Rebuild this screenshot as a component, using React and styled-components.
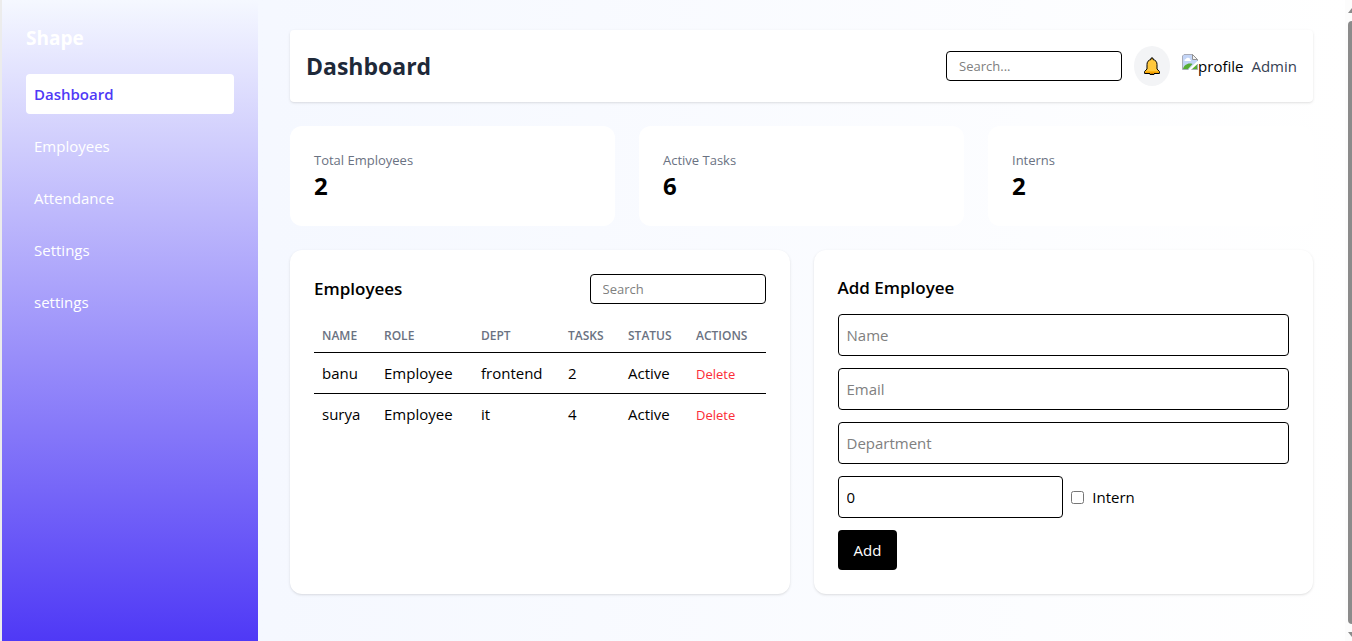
import React, { useState } from "react";
import styled, { createGlobalStyle } from "styled-components";

const GlobalStyle = createGlobalStyle`
  *, *::before, *::after { box-sizing: border-box; }
  body {
    margin: 0;
    font-family: "Segoe UI", "Open Sans", "Noto Sans", sans-serif;
    font-size: 15px;
    line-height: 24px;
    color: #000;
    background: #fff;
  }
  h1, h2, p { margin: 0; }
  button, input { font: inherit; color: inherit; margin: 0; }
`;

const Shell = styled.div`
  display: flex;
  min-height: 100vh;
  border-left: 2px solid #ececec;
  background: linear-gradient(to right, #f3f7ff, #f5f8ff 20%, #fff);
`;

const Sidebar = styled.aside`
  flex: 0 0 256px;
  padding: 24px;
  background: linear-gradient(to bottom, #f5f8ff, #4f39f6);
`;

const Brand = styled.p`
  margin-bottom: 22px;
  font-size: 19px;
  font-weight: 700;
  line-height: 28px;
  color: #fff;
`;

const Nav = styled.nav`
  display: flex;
  flex-direction: column;
  gap: 12px;
`;

const NavLink = styled.a`
  padding: 8px;
  border-radius: 4px;
  text-decoration: none;
  font-weight: ${(p) => (p.$active ? 600 : 400)};
  color: ${(p) => (p.$active ? "#4f39f6" : "#fff")};
  background: ${(p) => (p.$active ? "#fff" : "transparent")};
`;

const Main = styled.main`
  flex: 1;
  min-width: 0;
  padding: 30px 32px;
  display: flex;
  flex-direction: column;
  gap: 24px;
`;

const TopBar = styled.header`
  display: flex;
  align-items: center;
  justify-content: space-between;
  padding: 16px;
  border-radius: 4px;
  background: #fff;
  box-shadow: 0 1px 3px rgba(0, 0, 0, 0.1), 0 1px 2px -1px rgba(0, 0, 0, 0.1);
`;

const PageTitle = styled.h1`
  font-size: 23px;
  font-weight: 700;
  line-height: 32px;
  color: #1e2939;
`;

const Tools = styled.div`
  display: flex;
  align-items: center;
  gap: 12px;
`;

const SearchInput = styled.input`
  width: 176px;
  height: 30px;
  padding: 4px 12px;
  border: 1px solid #000;
  border-radius: 4px;
  background: #fff;
  font-size: 13px;
  line-height: 20px;
  &::placeholder { color: #808080; opacity: 1; }
`;

const BellButton = styled.button`
  display: flex;
  align-items: center;
  justify-content: center;
  width: 36px;
  height: 40px;
  padding: 0;
  border: 0;
  border-radius: 50%;
  background: #f3f4f6;
`;

const Profile = styled.div`
  display: flex;
  align-items: center;
  gap: 8px;
  color: #364153;
`;

const Avatar = styled.span`
  display: flex;
  color: #000;
  svg { flex: none; }
`;

const Stats = styled.section`
  display: grid;
  grid-template-columns: repeat(3, 1fr);
  gap: 24px;
`;

const StatCard = styled.div`
  padding: 24px;
  border-radius: 12px;
  background: #fff;
`;

const StatLabel = styled.p`
  font-size: 13px;
  line-height: 20px;
  color: #6a7282;
`;

const StatValue = styled.p`
  font-size: 24px;
  font-weight: 700;
  line-height: 32px;
`;

const Panels = styled.div`
  display: grid;
  grid-template-columns: repeat(2, 1fr);
  gap: 24px;
`;

const Panel = styled.section`
  min-width: 0;
  padding: 24px;
  border-radius: 12px;
  background: #fff;
  box-shadow: 0 1px 3px rgba(0, 0, 0, 0.1), 0 1px 2px -1px rgba(0, 0, 0, 0.1);
`;

const PanelHead = styled.div`
  display: flex;
  align-items: center;
  justify-content: space-between;
  margin-bottom: 16px;
`;

const PanelTitle = styled.h2`
  font-size: 17px;
  font-weight: 600;
  line-height: 28px;
`;

const Table = styled.table`
  width: 100%;
  table-layout: fixed;
  border-collapse: collapse;
  text-align: left;
`;

const Col = styled.col`
  width: ${(p) => p.$w}px;
`;

const Th = styled.th`
  padding: 8px;
  font-size: 12px;
  font-weight: 600;
  line-height: 16px;
  text-transform: uppercase;
  color: #6a7282;
`;

const Td = styled.td`
  padding: 8px;
`;

const Row = styled.tr`
  border-top: 1px solid #000;
`;

const DeleteButton = styled.button`
  padding: 0;
  border: 0;
  background: none;
  font-size: 13px;
  line-height: 20px;
  color: #fb2c36;
`;

const Form = styled.form`
  display: flex;
  flex-direction: column;
  align-items: flex-start;
  gap: 12px;
`;

const Field = styled.input`
  width: ${(p) => (p.$half ? "50%" : "100%")};
  height: 42px;
  padding: 8px;
  border: 1px solid #000;
  border-radius: 4px;
  background: #fff;
  &::placeholder { color: #808080; opacity: 1; }
`;

const FieldRow = styled.div`
  display: flex;
  align-items: center;
  gap: 8px;
  width: 100%;
`;

const CheckLabel = styled.label`
  display: flex;
  align-items: center;
  gap: 8px;
  input { width: 13px; height: 13px; }
`;

const AddButton = styled.button`
  padding: 8px 16px;
  border: 0;
  border-radius: 4px;
  color: #fff;
  background: #000;
`;

const ScrollTrack = styled.div`
  flex: 0 0 7px;
  display: flex;
  flex-direction: column;
  align-items: flex-start;
  gap: 8px;
  padding: 8px 0 4px 3px;
  overflow: hidden;
  background: #fcfcfc;
  svg { flex: none; display: block; }
`;

const ScrollThumb = styled.div`
  flex: 1;
  width: 9px;
  border-radius: 4px;
  background: #8b8b8b;
`;

const Bell = () => (
  <svg width="16" height="18" viewBox="0 0 16 18" aria-hidden="true">
    <path d="M7 1h2v1.500c2.700.5 4 2.500 4 5V12l2.400 2.500v2H10v1H6v-1H.6v-2L3 12V7.500c0-2.500 1.300-4.500 4-5z" fill="#ffc83d" stroke="#000" strokeLinejoin="round" />
    <path d="M1.200 14.400h13.600V16H1.200z" fill="#f5a300" />
    <path d="M6.500 16h3v1h-3z" fill="#c77a00" />
  </svg>
);

const BrokenImage = () => (
  <svg width="16" height="16" viewBox="0 0 16 16" aria-hidden="true">
    <path d="M2 .5h8.500l5 5V7L6.500 15.500H.5V2z" fill="#c3d5f7" />
    <path d="M2.500 7q-.5-2 1.500-2 .5-1.800 2.300-1.200Q8.300 4 8 5.500 9.500 6 9 7z" fill="#fff" />
    <path d="M1 15c1-4 5-6.500 9.500-5L6 15z" fill="#56ad35" />
    <path d="M15.500 10v5.500H9.500z" fill="#56ad35" />
    <path d="M6.500 15.500h-6V2L2 .5h8.500l5 5V7M9.500 15.500h6V10" fill="none" stroke="#a9acb8" />
    <path d="M10.500.5v5h5z" fill="#f4f4f4" stroke="#929292" />
  </svg>
);

const links = ["Dashboard", "Employees", "Attendance", "Settings", "settings"];
const stats = [["Total Employees", 2], ["Active Tasks", 6], ["Interns", 2]];
const columns = [["Name", 62], ["Role", 97], ["Dept", 87], ["Tasks", 60], ["Status", 68], ["Actions", 78]];
const employees = [
  ["banu", "Employee", "frontend", 2, "Active"],
  ["surya", "Employee", "it", 4, "Active"],
];

export default function App() {
  const [tasks, setTasks] = useState(0);
  return (
    <>
      <GlobalStyle />
      <Shell>
        <Sidebar>
          <Brand>Shape</Brand>
          <Nav>
            {links.map((name, i) => (
              <NavLink key={name} href="#" $active={i === 0}>{name}</NavLink>
            ))}
          </Nav>
        </Sidebar>
        <Main>
          <TopBar>
            <PageTitle>Dashboard</PageTitle>
            <Tools>
              <SearchInput type="text" placeholder="Search..." aria-label="Search" />
              <BellButton type="button" aria-label="Notifications"><Bell /></BellButton>
              <Profile>
                <Avatar><BrokenImage />profile</Avatar>
                <span>Admin</span>
              </Profile>
            </Tools>
          </TopBar>
          <Stats>
            {stats.map(([label, value]) => (
              <StatCard key={label}>
                <StatLabel>{label}</StatLabel>
                <StatValue>{value}</StatValue>
              </StatCard>
            ))}
          </Stats>
          <Panels>
            <Panel>
              <PanelHead>
                <PanelTitle>Employees</PanelTitle>
                <SearchInput type="text" placeholder="Search" aria-label="Search employees" />
              </PanelHead>
              <Table>
                <colgroup>
                  {columns.map(([name, w]) => <Col key={name} $w={w} />)}
                </colgroup>
                <thead>
                  <tr>{columns.map(([name]) => <Th key={name} scope="col">{name}</Th>)}</tr>
                </thead>
                <tbody>
                  {employees.map((cells) => (
                    <Row key={cells[0]}>
                      {cells.map((cell, i) => <Td key={i}>{cell}</Td>)}
                      <Td><DeleteButton type="button">Delete</DeleteButton></Td>
                    </Row>
                  ))}
                </tbody>
              </Table>
            </Panel>
            <Panel>
              <Form onSubmit={(e) => e.preventDefault()}>
                <PanelTitle>Add Employee</PanelTitle>
                <Field type="text" placeholder="Name" aria-label="Name" />
                <Field type="email" placeholder="Email" aria-label="Email" />
                <Field type="text" placeholder="Department" aria-label="Department" />
                <FieldRow>
                  <Field $half type="number" aria-label="Tasks" value={tasks} onChange={(e) => setTasks(e.target.value)} />
                  <CheckLabel><input type="checkbox" />Intern</CheckLabel>
                </FieldRow>
                <AddButton type="submit">Add</AddButton>
              </Form>
            </Panel>
          </Panels>
        </Main>
        <ScrollTrack aria-hidden="true">
          <svg width="9" height="5" viewBox="0 0 9 5"><path d="M0 5 4 0h1l4 5z" fill="#8b8b8b" /></svg>
          <ScrollThumb />
          <svg width="9" height="5" viewBox="0 0 9 5"><path d="M0 0 4 5h1l4-5z" fill="#8b8b8b" /></svg>
        </ScrollTrack>
      </Shell>
    </>
  );
}
